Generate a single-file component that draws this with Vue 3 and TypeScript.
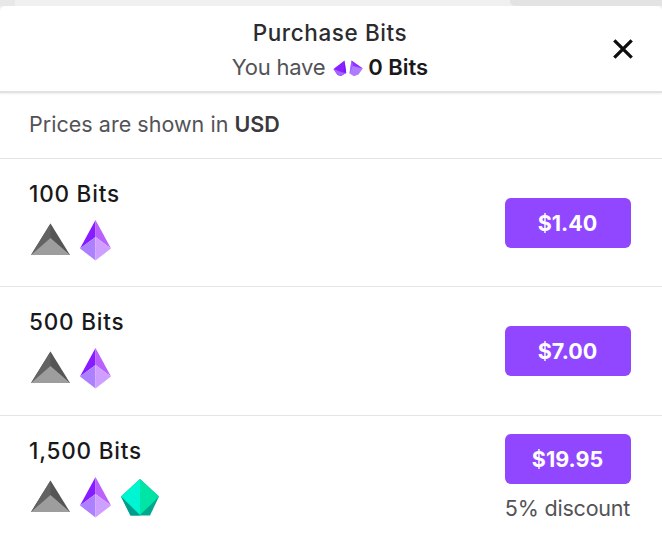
<script setup lang="ts">
interface Offer {
  amount: string
  price: string
  gems: string[]
  note?: string
}

const offers: Offer[] = [
  { amount: '100', price: '$1.40', gems: ['gray', 'purple'] },
  { amount: '500', price: '$7.00', gems: ['gray', 'purple'] },
  { amount: '1,500', price: '$19.95', gems: ['gray', 'purple', 'green'], note: '5% discount' },
]
</script>

<template>
  <div class="page">
    <div class="backdrop"><span class="edge"></span><span class="mid"></span><span class="tab"></span></div>
    <section class="dialog">
      <header class="header">
        <h1 class="title">Purchase Bits</h1>
        <p class="balance">
          <span class="have">You have</span>
          <svg class="mini" width="30" height="17" viewBox="0 0 30 17">
            <path d="M11.500 0.500L0.500 9L4.500 15L8 16L13.200 13Z" fill="#8b20ff" />
            <path d="M11.500 0.500L10.500 11.500L13.200 13Z" fill="#7f18f5" />
            <path d="M0.500 9L9.500 12.500L13.200 13L8 16L4.500 15Z" fill="#a466ff" />
            <path d="M18.500 0.500L29.800 8.500L25.500 14.500L21 16.300L16.500 13.500Z" fill="#b07cff" />
            <path d="M18.500 0.500L29.800 8.500L20 6Z" fill="#9130ff" />
            <path d="M18.500 0.500L20 6L16.500 13.500Z" fill="#a05fff" />
          </svg>
          <strong class="count">0 Bits</strong>
        </p>
        <button class="close" aria-label="Close">
          <svg width="20" height="20" viewBox="0 0 20 20">
            <path d="M1.300 1.300L18.700 18.700M18.700 1.300L1.300 18.700" stroke="#0e0e10" stroke-width="3.300" />
          </svg>
        </button>
      </header>
      <p class="currency"><span>Prices are shown in <strong>USD</strong></span></p>
      <ul class="offers">
        <li v-for="offer in offers" :key="offer.amount" class="offer">
          <div class="info">
            <h2 class="amount">{{ offer.amount }} Bits</h2>
            <div class="gems">
              <template v-for="gem in offer.gems" :key="gem">
                <svg v-if="gem === 'gray'" class="gem gray" width="40" height="42" viewBox="0 0 40 42">
                  <path d="M20.500 3.500L40 35H1Z" fill="#555" />
                  <path d="M20.500 3.500V18.500L1 35Z" fill="#636363" />
                  <path d="M20.500 18L40 35H1Z" fill="#9d9d9d" />
                </svg>
                <svg v-else-if="gem === 'purple'" class="gem purple" width="31" height="42" viewBox="0 0 31 42">
                  <path d="M15.500 0V17L0 28.500Z" fill="#861cff" />
                  <path d="M15.500 0V17L31 28.500Z" fill="#ba60ff" />
                  <path d="M15.500 17V40.500L0 28.500Z" fill="#ad80ff" />
                  <path d="M15.500 17V40.500L31 28.500Z" fill="#cf9fff" />
                </svg>
                <svg v-else class="gem green" width="38" height="42" viewBox="0 0 38 42">
                  <path d="M19 2L38 19.500L29 38.500H9.500L0 19.500Z" fill="#00a98d" />
                  <path d="M19 2V38L0 19.500Z" fill="#00f5d2" />
                  <path d="M19 2L38 19.500L19 38Z" fill="#00e5a5" />
                  <path d="M0 19.500L19 38.500H9.500Z" fill="#009d8c" />
                </svg>
              </template>
            </div>
          </div>
          <div class="purchase">
            <button class="buy">{{ offer.price }}</button>
            <span v-if="offer.note" class="note">{{ offer.note }}</span>
          </div>
        </li>
      </ul>
    </section>
  </div>
</template>

<style>
body { margin: 0; background: #fff; }
</style>

<style scoped>
.page {
  width: 662px;
  height: 543px;
  overflow: hidden;
  background: #f0f0f1;
  color: #19191b;
  font-family: Inter, "Liberation Sans", sans-serif;
}
.backdrop { display: flex; height: 6px; }
.edge { width: 15px; background: #e8e8e8; }
.mid { flex: 1; background: #f0f0f0; }
.tab { width: 152px; background: #e3e3e4; border-bottom-left-radius: 5px; }
.dialog { height: 537px; background: #fff; border-radius: 5px 5px 0 0; }
.header {
  position: relative;
  box-sizing: border-box;
  height: 87px;
  padding: 10px 2px 0 0;
  border-bottom: 2px solid #e2e2e3;
  box-shadow: 0 1px 2px #eee;
  text-align: center;
}
.title { margin: 0; font-size: 22.5px; line-height: 34px; font-weight: 520; letter-spacing: 0.6px; color: #2c2c2f; }
.balance { display: flex; justify-content: center; align-items: center; margin: 0; height: 34px; font-size: 22px; }
.have { color: #535357; font-weight: 370; letter-spacing: -0.25px; }
.mini { margin: 2px 5px 0 8px; }
.count { font-weight: 600; }
.close { position: absolute; top: 33px; right: 29px; padding: 0; border: 0; background: none; }
.close svg { display: block; }
.currency {
  display: flex;
  align-items: center;
  box-sizing: border-box;
  height: 66px;
  margin: 0;
  padding: 0 29px 3px;
  border-bottom: 1px solid #e3e3e4;
  font-size: 21.5px;
  color: #535357;
  font-weight: 370;
  letter-spacing: 0.03px;
}
.currency strong { font-weight: 560; color: #3a3a3e; }
.offers { margin: 0; padding: 0; list-style: none; }
.offer {
  display: flex;
  justify-content: space-between;
  box-sizing: border-box;
  height: 128px;
  padding: 0 31.5px 0 30px;
  border-bottom: 1px solid #e5e5e6;
}
.offer:nth-child(2) { height: 129px; }
.offer:last-child { border: 0; height: 126px; }
.info { padding-top: 19px; }
.amount { margin: 0 0 0 -1px; font-size: 22.5px; line-height: 32px; font-weight: 510; letter-spacing: 0.8px; }
.gems { display: flex; gap: 10px; margin-top: 10px; }
.gem { display: block; }
.purchase { display: flex; flex-direction: column; align-items: center; justify-content: center; width: 126px; }
.buy {
  flex: none;
  width: 126px;
  height: 50px;
  padding: 0;
  border: 0;
  border-radius: 6px;
  background: #9147ff;
  color: #fff;
  font: 700 21.5px/50px Inter, sans-serif;
}
.note { height: 32px; margin-top: 8px; font-size: 21.5px; line-height: 32px; font-weight: 370; letter-spacing: -0.2px; color: #535357; white-space: nowrap; }
</style>
